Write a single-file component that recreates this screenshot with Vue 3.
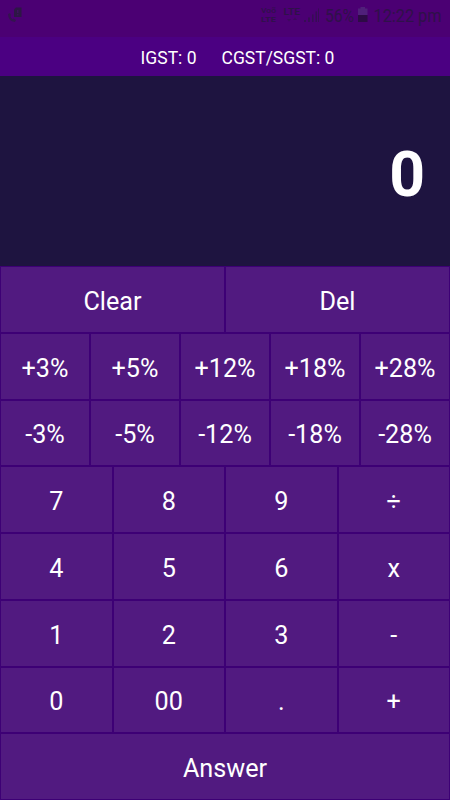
<script setup>
const rows = [
  ['Clear', 'Del'],
  ['+3%', '+5%', '+12%', '+18%', '+28%'],
  ['-3%', '-5%', '-12%', '-18%', '-28%'],
  ['7', '8', '9', '÷'],
  ['4', '5', '6', 'x'],
  ['1', '2', '3', '-'],
  ['0', '00', '.', '+'],
  ['Answer'],
]
</script>

<template>
  <main class="app">
    <header class="status">
      <svg class="status-icons" viewBox="0 0 450 37">
        <path d="M8 14 Q8 21 15 22 L16 20 L13.5 18.5 L12.5 19.3 Q10.7 18 10.5 16 L11 15 L10 13Z" fill="#34144f" />
        <path d="M16 7.5H21.5V17H14V9.5Z" fill="#2d1745" />
        <path d="M17.8 10V13M17.8 14.2V15.4" stroke="#48116b" />
        <g fill="#2f1149" font-family="Roboto, sans-serif">
          <text x="261" y="13.4" font-size="6.5" font-weight="500" textLength="15" lengthAdjust="spacingAndGlyphs">Voõ</text>
          <text x="261" y="22" font-size="7.4" font-weight="700" textLength="15" lengthAdjust="spacingAndGlyphs">LTE</text>
          <text x="283.5" y="15" font-size="9" font-weight="700" textLength="16.5" lengthAdjust="spacingAndGlyphs">LTE</text>
          <path d="M287 19H291L289 21.5ZM295 17.5L297 20H293Z" opacity=".55" />
          <path d="M304 20h2v2h-2zM308 17.5h2V22h-2zM312 14.5h1.5V22H312zM315.5 11.5h1.5V22h-1.5zM318 8.5h1V22h-1z" opacity=".75" />
          <text x="325" y="22" font-size="18.5" textLength="29" lengthAdjust="spacingAndGlyphs">56%</text>
          <text x="373.5" y="22" font-size="18.5" textLength="68" lengthAdjust="spacingAndGlyphs">12:22 pm</text>
        </g>
        <path d="M360.5 7H365V8.5H367.5V15H358V8.5H360.5Z" fill="#50207a" />
        <path d="M358 15H367.5V22H358Z" fill="#2d0b45" />
      </svg>
    </header>
    <section class="taxes">
      <span>IGST: 0</span>
      <span>CGST/SGST: 0</span>
    </section>
    <section class="display">0</section>
    <section class="keypad">
      <div v-for="(row, i) in rows" :key="i" class="row">
        <button v-for="key in row" :key="key" class="key">{{ key }}</button>
      </div>
    </section>
  </main>
</template>

<style>
body {
  margin: 0;
}
</style>

<style scoped>
.app {
  width: 450px;
  height: 800px;
  display: flex;
  flex-direction: column;
  overflow: hidden;
  background: #1e1440;
  color: #fff;
  font-family: Roboto, sans-serif;
}
.status {
  height: 37px;
  background: #4b0073;
}
.status-icons {
  display: block;
  width: 450px;
  height: 37px;
}
.taxes {
  height: 39px;
  box-sizing: border-box;
  padding: 2px 0 0 25px;
  display: flex;
  align-items: center;
  justify-content: center;
  gap: 25px;
  background: #4b0082;
  font-size: 17.5px;
}
.display {
  height: 190px;
  box-sizing: border-box;
  padding: 6px 25px 0 0;
  display: flex;
  align-items: center;
  justify-content: flex-end;
  font-size: 62.5px;
  font-weight: 700;
}
.keypad {
  flex: 1;
  display: flex;
  flex-direction: column;
  background: #3d0075;
}
.row {
  flex: 1;
  min-height: 0;
  display: flex;
}
.key {
  flex: 1 1 0;
  min-width: 0;
  margin: 0;
  padding: 4px 0 0;
  border: 1px solid #3d0075;
  border-radius: 0;
  background: #511a80;
  color: #fff;
  font: 400 25.2px Roboto, sans-serif;
}
</style>
